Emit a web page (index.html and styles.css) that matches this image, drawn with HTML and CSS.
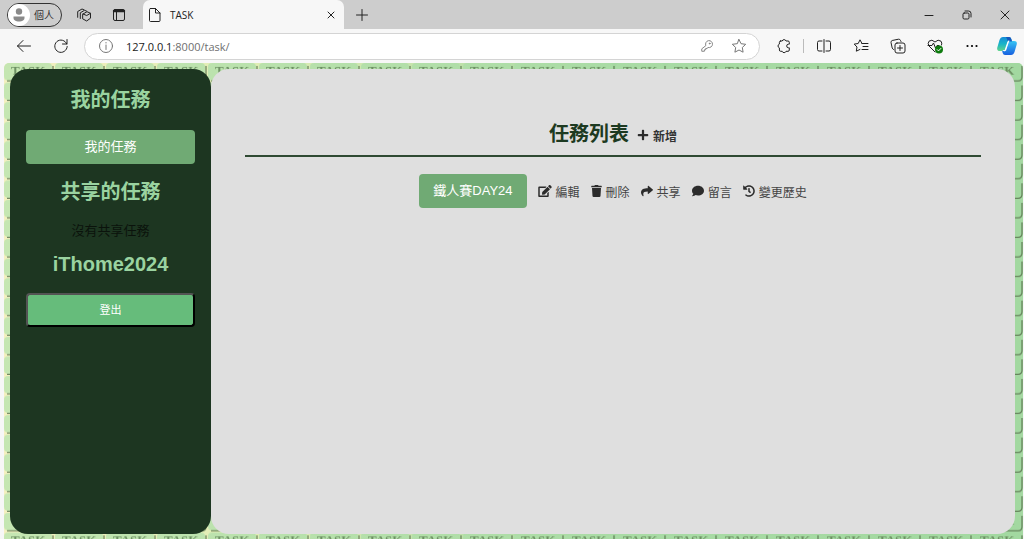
FILE: index.html
```html
<!DOCTYPE html>
<html lang="zh-Hant">
<head>
<meta charset="utf-8">
<title>TASK</title>
<link rel="stylesheet" href="styles.css">
</head>
<body>
<header class="chrome">
  <div class="tabstrip">
    <button class="profile" type="button">
      <svg class="avatar" viewBox="0 0 22 22"><circle cx="11" cy="11" r="11" fill="#fff"/><circle cx="11" cy="7.500" r="3.200" fill="#8a8a8a"/><path d="M5.500 12.500h11v1.200c0 2.600-2.300 3.800-5.500 3.800s-5.500-1.200-5.500-3.800z" fill="#8a8a8a"/></svg>
      <span>個人</span>
    </button>
    <button class="strip-button" type="button" aria-label="Workspaces">
      <svg viewBox="0 0 16 16" class="line"><path d="M7 7l4-2.300 3.500 1.600v4.900L10.700 14 7 12zM7 7l3.700 1.500 3.800-2.200M4.300 11.500V5.800L8.500 3.300l2 .8M1.700 10.300V4.500L6 2l2 .8"/></svg>
    </button>
    <button class="strip-button" type="button" aria-label="Tab actions">
      <svg viewBox="0 0 16 16" class="line"><rect x="2.500" y="2.500" width="11" height="11" rx="1.500"/><path d="M3 4h10" stroke-width="2.400"/><path d="M5.500 5v8.500"/></svg>
    </button>
    <div class="tab">
      <svg viewBox="0 0 16 16" class="line"><path d="M3.500 1.500h5l4.500 4.500v7.500q0 1-1 1h-8.500q-1 0-1-1v-11q0-1 1-1zM8.500 1.500v4.500h4.500"/></svg>
      <span class="tab-title">TASK</span>
      <button class="tab-close" type="button" aria-label="Close tab"><svg viewBox="0 0 8 8" class="line"><path d="M1 1l6 6M7 1l-6 6"/></svg></button>
    </div>
    <button class="strip-button" type="button" aria-label="New tab"><svg viewBox="0 0 16 16" class="line"><path d="M8 2.500v11M2.500 8h11"/></svg></button>
    <div class="window-buttons">
      <button type="button" aria-label="Minimize"><svg viewBox="0 0 10 10" class="line"><path d="M1 5.500h8"/></svg></button>
      <button type="button" aria-label="Restore"><svg viewBox="0 0 10 10" class="line"><rect x="1" y="3" width="6" height="6" rx="1.200"/><path d="M3 1h3.500q2.500 0 2.500 2.500v3.500"/></svg></button>
      <button type="button" aria-label="Close"><svg viewBox="0 0 10 10" class="line"><path d="M1 1l8 8M9 1l-8 8"/></svg></button>
    </div>
  </div>
  <div class="toolbar">
    <div class="nav">
      <button type="button" aria-label="Back"><svg viewBox="0 0 16 16" class="line"><path d="M14.500 8h-13M7 2.500L1.500 8 7 13.500"/></svg></button>
      <button type="button" aria-label="Reload"><svg viewBox="0 0 16 16" class="line"><path d="M13.800 6A6.200 6.200 0 1 0 14.200 8.500M14 1.500V6H9.500"/></svg></button>
    </div>
    <div class="address">
      <svg viewBox="0 0 16 16" class="line soft"><circle cx="8" cy="8" r="6.500"/><path d="M8 7v4.500M8 4.500v.500"/></svg>
      <span class="url"><span class="host">127.0.0.1</span>:8000/task/</span>
      <button type="button" aria-label="Passwords"><svg viewBox="0 0 16 16" class="line soft"><path d="M6.500 7.200A4 4 0 1 1 9.200 9.700L8 10.800H6.500v1.500H5V14H2v-2.300z"/><circle cx="11" cy="5.200" r=".5"/></svg></button>
      <button type="button" aria-label="Add to favorites"><svg viewBox="0 0 16 16" class="line soft"><path d="M8 1.500l2 4.200 4.700.6-3.400 3.200.8 4.700L8 12l-4.100 2.200.8-4.700L1.300 6.300 6 5.700z"/></svg></button>
    </div>
    <div class="tools">
      <button type="button" aria-label="Extensions"><svg viewBox="0 0 16 16" class="line"><path d="M4.500 3h1.700a2 2 0 0 1 3.800 0H12q1.300 0 1.300 1.300v1.900h-.8a1.800 1.800 0 0 0 0 3.600h.8V12q0 1.300-1.300 1.300h-2a2 2 0 0 1-3.800 0H4.700q-1.300 0-1.300-1.300V9.900a2 2 0 0 1 0-3.800V4.300Q3.400 3 4.500 3z"/></svg></button>
      <span class="divider"></span>
      <button type="button" aria-label="Split screen"><svg viewBox="0 0 16 16" class="line"><path d="M6 3H3Q1.500 3 1.500 4.500v7Q1.500 13 3 13h3M10 3h3q1.500 0 1.500 1.500v7q0 1.500-1.500 1.500h-3M8 1.500v13"/></svg></button>
      <button type="button" aria-label="Favorites"><svg viewBox="0 0 16 16" class="line"><path d="M9 5.500L7 1.800 5.200 5.500l-4 .6L4 9l-.7 4.200L7 11.400M9 5.500h6M10 8.500h5M9 11.500h6"/></svg></button>
      <button type="button" aria-label="Collections"><svg viewBox="0 0 16 16" class="line"><rect x="5" y="5" width="10" height="10" rx="2"/><path d="M10 7.500v5M7.500 10h5M3.500 11.500Q2.500 11 2.200 10L1 4.500Q.8 3 2.200 2.500L8.500 1.200Q10 1 10.500 2.500L11 3.500"/></svg></button>
      <button type="button" aria-label="Browser essentials"><svg viewBox="0 0 16 16" class="line"><path d="M8 14L2 8Q.3 5.500 2 3.200 4.800.8 8 4q3.200-3.200 6-.8 1.300 1.800.6 3.800M1 7.500h4l1.500-2.500 2 5 1.500-2.500h2"/><circle cx="12" cy="11.500" r="4" fill="#0f7b0f" stroke="none"/><path d="M10.200 11.600l1.300 1.300 2.400-2.500" stroke="#fff"/></svg></button>
      <button type="button" aria-label="Settings and more"><svg viewBox="0 0 16 16"><circle cx="3.500" cy="8" r="1.100"/><circle cx="8" cy="8" r="1.100"/><circle cx="12.500" cy="8" r="1.100"/></svg></button>
      <button class="copilot" type="button" aria-label="Copilot">
        <svg viewBox="0 0 20 18">
          <defs>
            <linearGradient id="cpa" x1="0" y1="0" x2="0" y2="1"><stop offset="0" stop-color="#168cd8"/><stop offset=".5" stop-color="#19b4c8"/><stop offset="1" stop-color="#62d58a"/></linearGradient>
            <linearGradient id="cpb" x1="0" y1="0" x2="0" y2="1"><stop offset="0" stop-color="#38c6f4"/><stop offset="1" stop-color="#1860e0"/></linearGradient>
          </defs>
          <path d="M6 0h6q1.800 0 2.300 2l.7 2.500h-2q-1.500 0-2 1.500L9 12q-.7 2-2.500 2H3Q-.5 14 .3 10.500L2.500 3Q3.500 0 6 0z" fill="url(#cpa)"/>
          <path d="M14 18H8q-1.800 0-2.300-2L5 13.500h2q1.500 0 2-1.500l2-6q.7-2 2.500-2H17q3.500 0 2.700 3.500L17.500 15q-1 3-3.500 3z" fill="url(#cpb)"/>
          <path d="M9 0h3q1.800 0 2.300 2l.7 2.500h-3Q10.500 4.500 10 2z" fill="#1558bd"/>
          <path d="M8.500 13.300L11.200 5q.3-.9 1-1-.9 0-1.200 1L8.300 13q-.4 1-1.300.5z" fill="#fff" stroke="#fff" stroke-width="1.200"/>
        </svg>
      </button>
    </div>
  </div>
</header>

<div class="page">
  <svg class="wallpaper" aria-hidden="true">
    <defs>
      <linearGradient id="mortar"><stop offset="0" stop-color="#f4f0c0"/><stop offset=".25" stop-color="#dfedb4"/><stop offset=".6" stop-color="#a5d8a2"/><stop offset="1" stop-color="#a5d8a2"/></linearGradient>
      <linearGradient id="face"><stop offset="0" stop-color="#c5e6b2"/><stop offset=".6" stop-color="#a9dba5"/><stop offset="1" stop-color="#a2d8a0"/></linearGradient>
      <pattern id="brick" width="51" height="19.560" patternUnits="userSpaceOnUse">
        <rect width="48" height="17.500" rx="4" fill="#fff"/>
      </pattern>
      <pattern id="engraving" width="51" height="19.560" patternUnits="userSpaceOnUse">
        <path d="M3 18h42q4 0 4-4V3" fill="none" stroke="#59744f" stroke-width="1.300" opacity=".85"/>
        <text class="brick-text" x="7" y="12">TASK</text>
      </pattern>
      <mask id="brick-mask"><rect width="100%" height="100%" fill="url(#brick)"/></mask>
    </defs>
    <rect width="100%" height="100%" fill="url(#mortar)"/>
    <rect width="100%" height="100%" fill="url(#face)" mask="url(#brick-mask)"/>
    <rect width="100%" height="100%" fill="url(#engraving)"/>
  </svg>
  <aside class="sidebar">
    <h2>我的任務</h2>
    <a class="side-link" href="#mine">我的任務</a>
    <h2>共享的任務</h2>
    <p>沒有共享任務</p>
    <h2 class="user">iThome2024</h2>
    <button class="logout" type="button">登出</button>
  </aside>
  <main class="content">
    <div class="list-head">
      <h2>任務列表</h2>
      <a class="action add" href="#add"><svg viewBox="0 0 448 512"><path d="M416 208H272V64c0-18-14-32-32-32h-32c-18 0-32 14-32 32v144H32c-18 0-32 14-32 32v32c0 18 14 32 32 32h144v144c0 18 14 32 32 32h32c18 0 32-14 32-32V304h144c18 0 32-14 32-32v-32c0-18-14-32-32-32z"/></svg>新增</a>
    </div>
    <div class="task">
      <a class="task-name" href="#task">鐵人賽DAY24</a>
      <a class="action" href="#edit"><svg class="wide" viewBox="0 0 576 512"><path d="M402.600 83.200l90.200 90.200c3.800 3.800 3.800 10 0 13.800L274.400 405.600l-92.800 10.300c-12.400 1.400-22.900-9.100-21.500-21.500l10.300-92.800L388.800 83.200c3.800-3.800 10-3.800 13.800 0zm162-22.900l-48.800-48.800c-15.200-15.200-39.900-15.200-55.200 0l-35.400 35.400c-3.800 3.800-3.800 10 0 13.800l90.200 90.200c3.800 3.800 10 3.800 13.800 0l35.400-35.400c15.200-15.300 15.200-40 0-55.200zM384 346.200V448H64V128h229.800c3.200 0 6.200-1.300 8.500-3.500l40-40c7.600-7.600 2.200-20.500-8.500-20.500H48C21.500 64 0 85.500 0 112v352c0 26.500 21.500 48 48 48h352c26.500 0 48-21.500 48-48V306.200c0-10.700-12.900-16-20.500-8.500l-40 40c-2.200 2.300-3.500 5.300-3.500 8.500z"/></svg>編輯</a>
      <a class="action" href="#delete"><svg class="slim" viewBox="0 0 448 512"><path d="M432 32H312l-9.400-18.700A24 24 0 0 0 281.100 0H166.800a23.720 23.720 0 0 0-21.400 13.300L136 32H16A16 16 0 0 0 0 48v32a16 16 0 0 0 16 16h416a16 16 0 0 0 16-16V48a16 16 0 0 0-16-16zM53.200 467a48 48 0 0 0 47.900 45h245.800a48 48 0 0 0 47.900-45L416 128H32z"/></svg>刪除</a>
      <a class="action" href="#share"><svg viewBox="0 0 512 512"><path d="M503.700 189.800L327.700 37.900C312.300 24.500 288 35.300 288 56v80.100C127.400 137.900 0 170.100 0 322.300c0 61.400 39.600 122.300 83.300 154.100 13.700 9.900 33.100-2.500 28.100-18.600C66.100 312.800 132.900 274.300 288 272.100V360c0 20.700 24.300 31.500 39.700 18.200l176-152c11.100-9.600 11.100-26.800 0-36.400z"/></svg>共享</a>
      <a class="action" href="#comments"><svg viewBox="0 0 512 512"><path d="M256 32C114.600 32 0 125.100 0 240c0 49.600 21.400 95 57 130.700C44.500 421.100 2.700 466 2.200 466.500c-2.200 2.300-2.800 5.700-1.500 8.700S4.800 480 8 480c66.300 0 116-31.800 140.600-51.400 32.700 12.300 69 19.400 107.400 19.400 141.400 0 256-93.100 256-208S397.400 32 256 32z"/></svg>留言</a>
      <a class="action" href="#history"><svg viewBox="0 0 512 512"><path d="M504 255.500c.3 136.600-111.200 248.400-247.800 248.500-59 0-113.200-20.500-155.800-54.900-11.100-8.900-11.900-25.500-1.800-35.600l11.300-11.300c8.600-8.600 22.400-9.600 31.900-2C173.100 425.100 212.800 440 256 440c101.700 0 184-82.300 184-184 0-101.700-82.300-184-184-184-48.800 0-93.100 19-126.100 49.900l50.800 50.800c10.100 10.100 2.900 27.300-11.300 27.300H24c-8.800 0-16-7.200-16-16V38.600c0-14.300 17.200-21.400 27.300-11.300l49.400 49.400C129.200 34.100 189.600 8 256 8c136.800 0 247.700 110.800 248 247.500zm-180.900 78.800l9.800-12.600c8.100-10.500 6.300-25.500-4.200-33.700L288 256.300V152c0-13.300-10.700-24-24-24h-16c-13.300 0-24 10.700-24 24v135.700l65.400 50.900c10.500 8.100 25.500 6.300 33.700-4.200z"/></svg>變更歷史</a>
    </div>
  </main>
</div>
</body>
</html>
```

FILE: styles.css
```css
* { box-sizing: border-box; }

body {
  margin: 0;
  min-height: 100vh;
  display: flex;
  flex-direction: column;
  background: #f7f7f7;
  font-family: "Liberation Sans", "Noto Sans CJK TC", sans-serif;
}

button {
  font: inherit;
  border: 0;
  padding: 0;
  background: none;
}

a { text-decoration: none; }

h2, p { margin: 0; }

.line {
  fill: none;
  stroke: #222;
  stroke-width: 1;
  stroke-linecap: round;
  stroke-linejoin: round;
}

.soft { stroke: #777; }

.chrome { font-family: "Open Sans", "Noto Sans CJK TC", sans-serif; }

.tabstrip {
  display: flex;
  align-items: center;
  height: 29px;
  padding-left: 7px;
  background: #cdcdcd;
}

.profile {
  display: flex;
  align-items: center;
  gap: 4px;
  height: 24px;
  padding: 0 7px 0 0;
  border: 1px solid #333;
  border-radius: 12px;
  font-size: 10px;
  color: #333;
}

.avatar { width: 22px; height: 22px; }

.strip-button {
  display: grid;
  place-items: center;
  width: 35px;
  height: 28px;
}

.profile + .strip-button { margin-left: 4px; }

.strip-button svg { width: 16px; height: 16px; }

.tab {
  display: flex;
  align-items: center;
  gap: 7px;
  width: 201px;
  height: 29px;
  margin-left: 7px;
  padding: 0 9px 0 4px;
  border-radius: 7px 7px 0 0;
  background: #f7f7f7;
}

.tab > svg { width: 16px; height: 16px; }

.tab-title { flex: 1; font-size: 10px; color: #222; }

.tab-close { display: grid; }

.tab-close svg { width: 8px; height: 8px; }

.window-buttons { display: flex; margin-left: auto; }

.window-buttons button {
  display: grid;
  place-items: center;
  width: 38px;
  height: 28px;
}

.window-buttons svg { width: 10px; height: 10px; }

.toolbar {
  display: flex;
  align-items: center;
  height: 34px;
  background: #f7f7f7;
}

.nav { display: flex; padding: 0 5px; }

.nav button, .tools button {
  display: grid;
  place-items: center;
  width: 37px;
  height: 28px;
}

.nav svg, .tools svg { width: 16px; height: 16px; }

.address {
  flex: 1;
  display: flex;
  align-items: center;
  height: 27px;
  padding: 0 12px 0 13px;
  border: 1px solid #d4d4d4;
  border-radius: 14px;
  background: #fff;
}

.address svg { display: block; width: 16px; height: 16px; }

.address button { margin-left: 17px; }

.address button:first-of-type svg { width: 14px; height: 14px; }

.url {
  flex: 1;
  margin-left: 12px;
  font-size: 11px;
  color: #6f6f6f;
}

.host { color: #1a1a1a; }

.tools { display: flex; align-items: center; padding-left: 5px; }

.divider { width: 1px; height: 14px; margin: 0 1px; background: #bbb; }

.tools .copilot { width: 34px; }

.tools .copilot svg { width: 20px; height: 18px; }

.page {
  position: relative;
  flex: 1;
  display: flex;
  margin: 0 1px 0 4px;
  padding: 6px 8px 5px 6px;
}

.wallpaper {
  position: absolute;
  inset: 0;
  width: 100%;
  height: 100%;
  border-radius: 5px 5px 0 0;
}

.brick-text {
  font: bold 13px "Liberation Serif", serif;
  fill: #6d9163;
}

.sidebar, .content {
  position: relative;
  border-radius: 18px;
}

.sidebar {
  display: flex;
  flex-direction: column;
  width: 20%;
  padding: 19px 16px;
  background: #1d3621;
  text-align: center;
}

.sidebar h2 {
  font-size: 20px;
  line-height: 24px;
  font-weight: 700;
  color: #9ad3a0;
}

.sidebar .user { margin-top: 12px; }

.side-link, .logout, .task-name {
  border-radius: 4px;
  line-height: 34px;
  color: #fff;
}

.side-link {
  margin: 18px 0 16px;
  background: #70aa74;
  font-size: 13px;
}

.sidebar p {
  margin-top: 18px;
  font-size: 13px;
  line-height: 18px;
  color: #0b130c;
}

.logout {
  margin-top: 17px;
  border: 2px outset #000;
  background: #66bc7b;
  font-size: 11px;
  line-height: 30px;
}

.content {
  flex: 1;
  padding: 51px 34px;
  background: #dfdfdf;
}

.list-head {
  display: flex;
  justify-content: center;
  align-items: baseline;
  gap: 8px;
  padding-bottom: 7px;
  border-bottom: 2px solid #2f4a33;
}

.list-head h2 {
  font-size: 20px;
  line-height: 28px;
  font-weight: 700;
  color: #1d3a21;
}

.task {
  display: flex;
  justify-content: center;
  align-items: center;
  gap: 11px;
  margin-top: 17px;
}

.task-name {
  padding: 0 14px;
  background: #70aa74;
  font-size: 13px;
}

.action {
  display: flex;
  align-items: center;
  gap: 4px;
  font-size: 12px;
  color: #444;
}

.action svg { width: 12px; height: 12px; fill: #2c2c2c; }

.action .wide { width: 14px; }

.action .slim { width: 11px; }

.add { font-weight: 700; color: #333; }
```
